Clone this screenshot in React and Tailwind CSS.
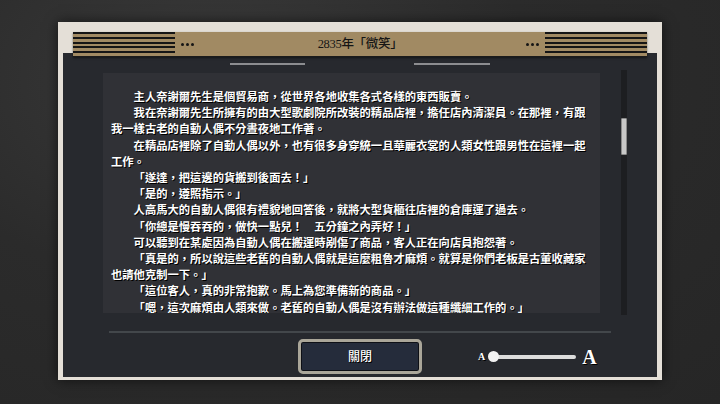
import React from 'react';

const paragraphs = [
  '主人奈謝爾先生是個貿易商，從世界各地收集各式各樣的東西販賣。',
  '我在奈謝爾先生所擁有的由大型歌劇院所改裝的精品店裡，擔任店內清潔員。在那裡，有跟我一樣古老的自動人偶不分晝夜地工作著。',
  '在精品店裡除了自動人偶以外，也有很多身穿統一且華麗衣裳的人類女性跟男性在這裡一起工作。',
  '「遂達，把這邊的貨搬到後面去！」',
  '「是的，遵照指示。」',
  '人高馬大的自動人偶很有禮貌地回答後，就將大型貨櫃往店裡的倉庫運了過去。',
  '「你總是慢吞吞的，做快一點兒！　五分鐘之內弄好！」',
  '可以聽到在某處因為自動人偶在搬運時剐傷了商品，客人正在向店員抱怨著。',
  '「真是的，所以說這些老舊的自動人偶就是這麼粗魯才麻煩。就算是你們老板是古董收藏家也請他克制一下。」',
  '「這位客人，真的非常抱歉。馬上為您準備新的商品。」',
  '「嗯，這次麻煩由人類來做。老舊的自動人偶是沒有辦法做這種纖細工作的。」',
];

// header stripes, drawn as a repeating gradient
function Stripes() {
  return (
    <div className="w-[102px] h-[24px] self-start bg-[repeating-linear-gradient(to_bottom,#151515_0px,#151515_2px,#a18a63_2px,#a18a63_4.8px)]" />
  );
}

function Dots() {
  return (
    <div className="flex gap-[2px] mx-[6px]">
      <span className="w-[3px] h-[3px] rounded-full bg-[#151515]" />
      <span className="w-[3px] h-[3px] rounded-full bg-[#151515]" />
      <span className="w-[3px] h-[3px] rounded-full bg-[#151515]" />
    </div>
  );
}

export default function App() {
  return (
    <div
      className="w-[720px] h-[404px] overflow-hidden pt-[22px] pl-[58px] bg-[#2a2a2a] bg-[radial-gradient(ellipse_at_30%_20%,#3a3a3a_0%,#2b2b2b_45%,#262626_100%)]"
      style={{ fontFamily: '"Liberation Serif", "Noto Sans CJK TC", serif' }}
    >
      {/* cream frame */}
      <div className="w-[604px] h-[358px] bg-[#e4dfd7] flex flex-col px-[5px] pb-[3px] pt-[10px] shadow-[0_0_12px_rgba(0,0,0,0.6)]">
        {/* title bar */}
        <div className="relative z-10 mx-[10px] h-[25px] flex items-center bg-[#a18a63] border-b border-[#1b1b1b] shadow-[0_1px_2px_rgba(0,0,0,0.5)]">
          <Stripes />
          <Dots />
          <div className="flex-1 text-center text-[12.5px] leading-none font-medium text-[#151515] tracking-tight">
            2835年「微笑」
          </div>
          <Dots />
          <Stripes />
        </div>

        {/* dark panel */}
        <div className="-mt-[4px] flex-1 bg-[#27292e] flex flex-col">
          <div className="pt-[10px] flex justify-center gap-[109px]">
            <div className="w-[75px] h-[2px] bg-[#8c8d90]" />
            <div className="w-[76px] h-[2px] bg-[#8c8d90]" />
          </div>

          <div className="mt-[8px] flex items-start pl-[40px]">
            <div className="w-[497px] h-[240px] bg-[#303136] overflow-hidden pl-[8px] pt-[16px]">
              <div className="w-[480px] text-[11.3px] leading-[16.2px] text-white font-semibold [text-shadow:1px_1px_0_#000]">
                {paragraphs.map((p, i) => (
                  <p key={i} className="indent-[2em]">
                    {p}
                  </p>
                ))}
              </div>
            </div>
            {/* scrollbar */}
            <div className="ml-[21px] -mt-[3px] w-[6px] h-[245px] bg-[#1d1e21] pt-[48px]">
              <div className="w-[6px] h-[37px] bg-[#c8c8c8] rounded-[1px] border border-[#8a8a8a]" />
            </div>
          </div>

          <div className="mt-[16px] ml-[46px] w-[502px] h-[2px] bg-[#43474b]" />

          <div className="mt-[6px] flex items-center pl-[235px]">
            <button className="w-[124px] h-[35px] rounded-[5px] border-[3px] border-[#aaa699] bg-[#252c3b] shadow-[inset_0_0_0_1px_#0e1016] flex items-center justify-center text-[12px] font-medium text-white [text-shadow:1px_1px_0_#000]">
              關閉
            </button>
            {/* text size slider */}
            <div className="ml-[56px] flex items-center">
              <span className="text-[10px] font-bold text-white leading-none [text-shadow:1px_1px_0_#000]">A</span>
              <div className="ml-[3px] w-[11px] h-[11px] rounded-full bg-[#f2f2f2] relative z-10" />
              <div className="-ml-[2px] w-[79px] h-[4px] rounded-full bg-[#dcdcdc]" />
              <span className="ml-[6px] text-[20px] font-bold text-white leading-none [text-shadow:1px_1px_0_#000]">A</span>
            </div>
          </div>
        </div>
      </div>
    </div>
  );
}
